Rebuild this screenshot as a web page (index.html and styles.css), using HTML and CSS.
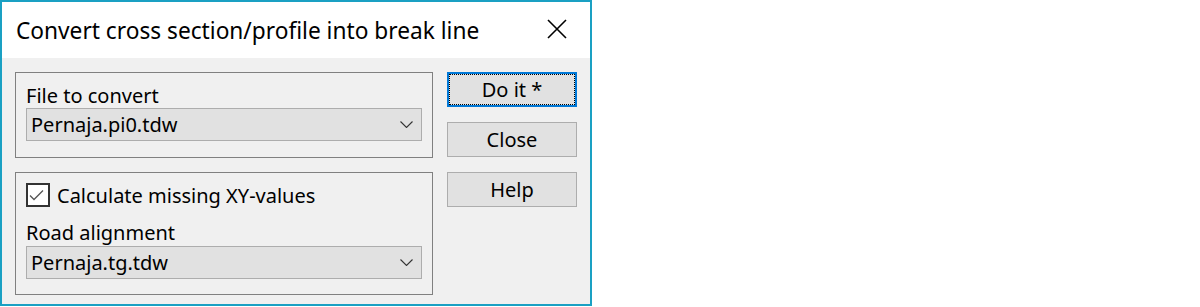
FILE: index.html
```html
<!DOCTYPE html>
<html lang="en">
<head>
  <meta charset="UTF-8" />
  <title>Convert cross section/profile into break line</title>
  <link rel="stylesheet" href="styles.css">
</head>
<body>
  <div class="dialog">
    <div class="title-bar">
      <span class="title">Convert cross section/profile into break line</span>
      <svg class="close-icon" width="20" height="20" viewBox="0 0 20 20">
        <path d="M1 1 L19 19 M19 1 L1 19" stroke="#000" stroke-width="1.6" fill="none" />
      </svg>
    </div>
    <div class="client">
      <div class="groups">
        <div class="group group-file">
          <label class="field-label">File to convert</label>
          <div class="combo">
            <span>Pernaja.pi0.tdw</span>
            <svg class="chevron" width="13" height="7" viewBox="0 0 13 7">
              <path d="M0.5 0.5 L6.5 6.5 L12.5 0.5" stroke="#333" stroke-width="1.1" fill="none" />
            </svg>
          </div>
        </div>
        <div class="group group-xy">
          <div class="check-row">
            <span class="checkbox">
              <svg width="20" height="20" viewBox="0 0 20 20">
                <path d="M2 10.5 L6 14.5 L15 5.5" stroke="#555" stroke-width="1.3" fill="none" />
              </svg>
            </span>
            <span>Calculate missing XY-values</span>
          </div>
          <label class="field-label">Road alignment</label>
          <div class="combo">
            <span>Pernaja.tg.tdw</span>
            <svg class="chevron" width="13" height="7" viewBox="0 0 13 7">
              <path d="M0.5 0.5 L6.5 6.5 L12.5 0.5" stroke="#333" stroke-width="1.1" fill="none" />
            </svg>
          </div>
        </div>
      </div>
      <div class="buttons">
        <button class="btn btn-default"><span class="focus">Do it *</span></button>
        <button class="btn">Close</button>
        <button class="btn">Help</button>
      </div>
    </div>
  </div>
</body>
</html>
```

FILE: styles.css
```css
* {
  box-sizing: border-box;
}
body {
  margin: 0;
  background: #fff;
  font-family: "Noto Sans", "Open Sans", sans-serif;
  color: #000;
}
.dialog {
  width: 592px;
  height: 306px;
  border: 2px solid #1aa0c3;
  background: #f0f0f0;
  display: flex;
  flex-direction: column;
}
.title-bar {
  height: 56px;
  flex-shrink: 0;
  background: #fff;
  display: flex;
  align-items: center;
  justify-content: space-between;
  padding: 0 23px 0 14px;
}
.title {
  font-size: 22.7px;
}
.close-icon {
  margin-top: -3px;
}
.client {
  display: flex;
  padding: 14px 0 0 13px;
  gap: 14px;
}
.groups {
  display: flex;
  flex-direction: column;
  gap: 14px;
}
.group {
  width: 418px;
  border: 1px solid #808080;
  padding: 10px 10px 0;
  display: flex;
  flex-direction: column;
  font-size: 20px;
}
.group-file {
  height: 86px;
}
.group-xy {
  height: 123px;
}
.field-label {
  line-height: 25px;
}
.combo {
  height: 33px;
  border: 1px solid #adadad;
  background: #e1e1e1;
  display: flex;
  align-items: center;
  justify-content: space-between;
  padding: 0 8px 0 4px;
}
.group-xy .combo {
  margin-top: 1px;
}
.chevron {
  display: block;
}
.check-row {
  display: flex;
  align-items: center;
  gap: 7px;
  height: 24px;
  margin-bottom: 13px;
}
.checkbox {
  width: 24px;
  height: 24px;
  border: 2px solid #333;
  background: #fff;
  display: flex;
}
.buttons {
  display: flex;
  flex-direction: column;
  gap: 15px;
}
.btn {
  width: 130px;
  height: 35px;
  border: 1px solid #adadad;
  background: #e1e1e1;
  font-family: inherit;
  font-size: 20px;
  color: #000;
  padding: 0;
}
.btn-default {
  border: 2px solid #0078d7;
  display: flex;
}
.focus {
  flex: 1;
  border: 1px dotted #000;
  display: flex;
  align-items: center;
  justify-content: center;
}
```
